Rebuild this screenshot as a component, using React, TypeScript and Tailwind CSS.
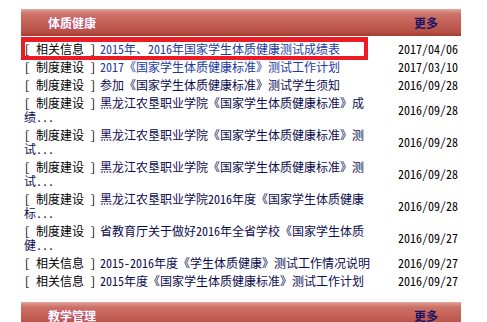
const items = [
  { cat: "相关信息", title: "2015年、2016年国家学生体质健康测试成绩表", date: "2017/04/06", blue: true },
  { cat: "制度建设", title: "2017《国家学生体质健康标准》测试工作计划", date: "2017/03/10", blue: true },
  { cat: "制度建设", title: "参加《国家学生体质健康标准》测试学生须知", date: "2016/09/28" },
  { cat: "制度建设", title: "黑龙江农垦职业学院《国家学生体质健康标准》成绩...", date: "2016/09/28" },
  { cat: "制度建设", title: "黑龙江农垦职业学院《国家学生体质健康标准》测试...", date: "2016/09/28" },
  { cat: "制度建设", title: "黑龙江农垦职业学院《国家学生体质健康标准》测试...", date: "2016/09/28" },
  { cat: "制度建设", title: "黑龙江农垦职业学院2016年度《国家学生体质健康标...", date: "2016/09/28" },
  { cat: "制度建设", title: "省教育厅关于做好2016年全省学校《国家学生体质健...", date: "2016/09/27" },
  { cat: "相关信息", title: "2015-2016年度《学生体质健康》测试工作情况说明", date: "2016/09/27" },
  { cat: "相关信息", title: "2015年度《国家学生体质健康标准》测试工作计划", date: "2016/09/27" },
]

function SectionHeader({ title }: { title: string }) {
  return (
    <div className="flex h-[27px] items-center justify-between bg-[linear-gradient(to_bottom,#e2aaa2_0px,#d98e85_2px,#cd7266_5px,#c6645a_45%,#b65045_85%,#a53d31_100%)] pl-[27px] pr-[23px]">
      <span className="text-[12px] font-bold leading-none text-white [text-shadow:0_0_1px_#c040a0]">{title}</span>
      <a href="#" className="text-[12px] font-bold leading-none text-[#1b1464]">
        更多
      </a>
    </div>
  )
}

export default function App() {
  return (
    <div className="min-h-screen bg-white pl-[21px] pt-[9px] font-['Noto_Sans_CJK_SC',sans-serif] text-[12px] text-black [font-feature-settings:'hwid']">
      <div className="w-[440px]">
        <SectionHeader title="体质健康" />

        <ul className="mb-[12px] mt-[4px]">
          {items.map((item, i) => (
            <li key={i} className="relative flex items-center px-[3px] py-[2px] leading-[14px]">
              <div className="w-[348px]">
                [ {item.cat} ]<span className="inline-block w-[4px]" />
                <a href="#" className={item.blue ? "text-[#1c3a9e]" : "text-[#0c0c4e]"}>
                  {item.title}
                </a>
              </div>
              <span className="flex-1 text-right">{item.date}</span>
              {i === 0 && (
                <div className="absolute -top-[3px] left-0 h-[23px] w-[347px] border-4 border-t-[5px] border-[#ed1c24]" />
              )}
            </li>
          ))}
        </ul>

        <SectionHeader title="教学管理" />
      </div>
    </div>
  )
}
